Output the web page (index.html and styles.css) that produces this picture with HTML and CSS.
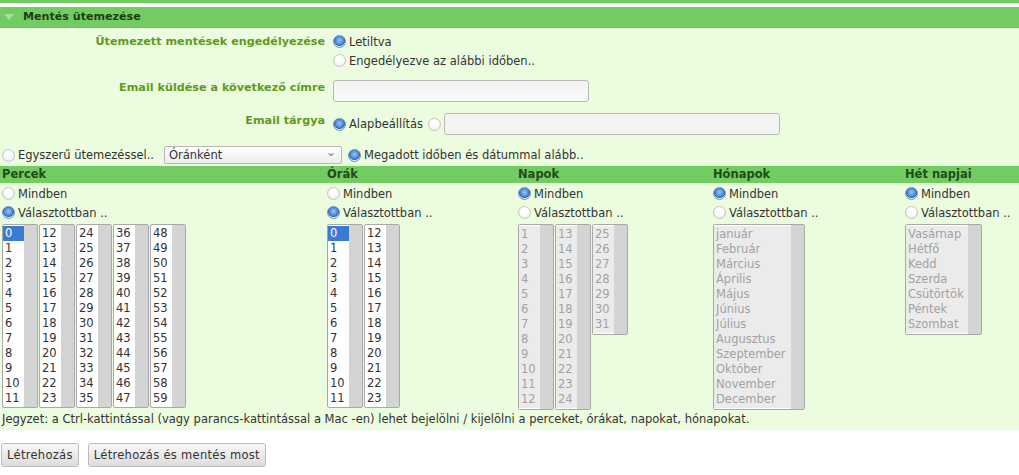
FILE: index.html
```html
<!DOCTYPE html>
<html lang="hu">
<head>
    <meta charset="UTF-8">
    <title>Mentés ütemezése</title>
    <link rel="stylesheet" href="styles.css">
</head>
<body>
    <div class="top-bar"></div>
    <div class="section-head"><span class="arrow"></span>Mentés ütemezése</div>
    <div class="section-body">
        <div class="field">
            <div class="label">Ütemezett mentések engedélyezése</div>
            <div class="controls stack">
                <label class="opt"><input type="radio" name="en" checked> Letiltva</label>
                <label class="opt"><input type="radio" name="en"> Engedélyezve az alábbi időben..</label>
            </div>
        </div>
        <div class="field email">
            <div class="label">Email küldése a következő címre</div>
            <div class="controls"><input class="text" type="text" style="width:256px"></div>
        </div>
        <div class="field subject">
            <div class="label">Email tárgya</div>
            <div class="controls row">
                <label class="opt"><input type="radio" name="subj" checked> Alapbeállítás</label>
                <input type="radio" name="subj" class="lone">
                <input class="text" type="text" style="width:336px">
            </div>
        </div>
        <div class="mode-row">
            <label class="opt"><input type="radio" name="mode"> Egyszerű ütemezéssel..</label>
            <div class="select">Óránként<span class="chev">&#8964;</span></div>
            <label class="opt"><input type="radio" name="mode" checked> Megadott időben és dátummal alább..</label>
        </div>

        <div class="sched">
            <div class="col-head">Percek</div>
            <div class="col-head">Órák</div>
            <div class="col-head">Napok</div>
            <div class="col-head">Hónapok</div>
            <div class="col-head">Hét napjai</div>

            <div class="col">
                <label class="opt"><input type="radio" name="m"> Mindben</label>
                <label class="opt"><input type="radio" name="m" checked> Választottban ..</label>
                <div class="lists" id="minutes"></div>
            </div>
            <div class="col">
                <label class="opt"><input type="radio" name="h"> Mindben</label>
                <label class="opt"><input type="radio" name="h" checked> Választottban ..</label>
                <div class="lists" id="hours"></div>
            </div>
            <div class="col">
                <label class="opt"><input type="radio" name="d" checked> Mindben</label>
                <label class="opt"><input type="radio" name="d"> Választottban ..</label>
                <div class="lists" id="days"></div>
            </div>
            <div class="col">
                <label class="opt"><input type="radio" name="mo" checked> Mindben</label>
                <label class="opt"><input type="radio" name="mo"> Választottban ..</label>
                <div class="lists" id="months"></div>
            </div>
            <div class="col">
                <label class="opt"><input type="radio" name="w" checked> Mindben</label>
                <label class="opt"><input type="radio" name="w"> Választottban ..</label>
                <div class="lists" id="weekdays"></div>
            </div>
        </div>
        <p class="note">Jegyzet: a Ctrl-kattintással (vagy parancs-kattintással a Mac -en) lehet bejelölni / kijelölni a perceket, órákat, napokat, hónapokat.</p>
    </div>
    <div class="buttons">
        <button>Létrehozás</button>
        <button>Létrehozás és mentés most</button>
    </div>

    <script>
        function range(a, b) {
            const out = [];
            for (let i = a; i <= b; i++) out.push(String(i));
            return out;
        }

        function addList(id, items, opts) {
            opts = opts || {};
            const box = document.createElement('div');
            box.className = 'listbox' + (opts.disabled ? ' disabled' : '') + (opts.wide ? ' ' + opts.wide : '');
            const inner = document.createElement('div');
            inner.className = 'items';
            items.forEach((text, i) => {
                const row = document.createElement('div');
                row.className = 'item' + (opts.selected && i === 0 ? ' selected' : '');
                row.textContent = text;
                inner.appendChild(row);
            });
            const bar = document.createElement('div');
            bar.className = 'scroll';
            box.appendChild(inner);
            box.appendChild(bar);
            document.getElementById(id).appendChild(box);
        }

        addList('minutes', range(0, 11), { selected: true });
        addList('minutes', range(12, 23));
        addList('minutes', range(24, 35));
        addList('minutes', range(36, 47));
        addList('minutes', range(48, 59));

        addList('hours', range(0, 11), { selected: true });
        addList('hours', range(12, 23));

        addList('days', range(1, 12), { disabled: true });
        addList('days', range(13, 24), { disabled: true });
        addList('days', range(25, 31), { disabled: true });

        addList('months', ['január', 'Február', 'Március', 'Április', 'Május', 'Június', 'Július',
            'Augusztus', 'Szeptember', 'Október', 'November', 'December'], { disabled: true, wide: 'months' });

        addList('weekdays', ['Vasárnap', 'Hétfő', 'Kedd', 'Szerda', 'Csütörtök', 'Péntek', 'Szombat'],
            { disabled: true, wide: 'weekdays' });
    </script>
</body>
</html>
```

FILE: styles.css
```css
body {
    margin: 0;
    font-family: "DejaVu Sans", Verdana, sans-serif;
    font-size: 11.5px;
    color: #333;
    background-color: #ffffff;
}
.top-bar {
    height: 3px;
    background-color: #72cc62;
    margin-bottom: 4px;
}
.section-head {
    height: 20px;
    line-height: 20px;
    background-color: #72cc62;
    border-bottom: 1px solid #68c058;
    color: #1e3d17;
    font-weight: bold;
    font-size: 11.1px;
    display: flex;
    align-items: center;
}
.section-head .arrow {
    width: 0;
    height: 0;
    border-left: 5px solid transparent;
    border-right: 5px solid transparent;
    border-top: 6px solid #a8dca0;
    margin: 0 9px 0 4px;
}
.section-body {
    background-color: #ecfcdf;
    padding-top: 4px;
    padding-bottom: 2px;
}
.field {
    display: grid;
    grid-template-columns: 325px 1fr;
    column-gap: 8px;
}
.field .label {
    text-align: right;
    color: #5f9a1c;
    font-weight: bold;
    font-size: 11.2px;
    line-height: 19px;
}
.field.email {
    margin-top: 10px;
}
.field.email .label,
.field.subject .label {
    line-height: 16px;
}
.field.subject {
    margin-top: 11px;
}
.controls.stack {
    display: flex;
    flex-direction: column;
}
.controls.row {
    display: flex;
    align-items: center;
    height: 22px;
}
.opt {
    display: flex;
    align-items: center;
    height: 19px;
    white-space: nowrap;
    color: #333;
    font-size: 11.5px;
}
input[type="radio"] {
    appearance: none;
    -webkit-appearance: none;
    width: 13px;
    height: 13px;
    margin: 0 3px 0 0;
    border-radius: 50%;
    border: 1px solid #c4c4c4;
    background: radial-gradient(circle at 50% 35%, #ffffff 30%, #e6e6e6 100%);
    box-sizing: border-box;
    flex: none;
}
input[type="radio"]:checked {
    border-color: #6e8fb6;
    background: radial-gradient(circle at 50% 40%, #9cc7f5 0%, #4d8ce0 45%, #2f67b8 60%, #e8eef6 70%, #ffffff 100%);
}
input.lone {
    margin-left: 5px;
}
input.text {
    height: 22px;
    box-sizing: border-box;
    border: 1px solid #b8b8b8;
    border-radius: 3px;
    background: linear-gradient(#f2f2f2, #fafafa);
    padding: 0 4px;
}
.field.subject input.text {
    background: #f4f4f4;
}
.mode-row {
    display: flex;
    align-items: center;
    height: 18px;
    margin-top: 11px;
    padding-left: 2px;
}
.select {
    width: 178px;
    height: 18px;
    box-sizing: border-box;
    border: 1px solid #b8b8b8;
    border-radius: 2px;
    background: linear-gradient(#ffffff, #ececec);
    font-size: 11.5px;
    line-height: 16px;
    padding-left: 4px;
    margin: 0 6px 0 10px;
    position: relative;
    color: #333;
}
.select .chev {
    position: absolute;
    right: 5px;
    top: -3px;
    color: #888;
    font-size: 12px;
}
.sched {
    display: grid;
    grid-template-columns: 325px 191px 195px 192px 1fr;
    margin-top: 2px;
}
.col-head {
    background-color: #72cc62;
    height: 17px;
    line-height: 17px;
    font-weight: bold;
    font-size: 11.5px;
    color: #234a1a;
    padding-left: 2px;
}
.col {
    padding-left: 2px;
    padding-top: 1px;
}
.lists {
    display: flex;
    align-items: flex-start;
    gap: 1px;
    margin-top: 2px;
}
.listbox {
    display: flex;
    width: 34px;
    border: 1px solid #a8a8a8;
    border-radius: 2px;
    background-color: #ffffff;
    font-size: 11.5px;
}
.listbox .items {
    flex: 1;
    padding: 1px 0;
}
.listbox .item {
    height: 15px;
    line-height: 15px;
    padding-left: 2px;
    color: #333;
    white-space: nowrap;
}
.listbox .item.selected {
    background-color: #3b7bd4;
    color: #ffffff;
}
.listbox .scroll {
    width: 13px;
    background-color: #d4d4d4;
}
.listbox.disabled .items {
    background-color: #ebebeb;
    border-top: 1px solid #ffffff;
    border-bottom: 1px solid #ffffff;
}
.listbox.disabled .item {
    color: #a2a2a2;
}
.listbox.months {
    width: 90px;
}
.listbox.weekdays {
    width: 75px;
}
.note {
    margin: 0 0 0 2px;
    height: 18px;
    line-height: 18px;
    font-size: 11.5px;
    color: #333;
}
.buttons {
    display: flex;
    gap: 9px;
    margin-top: 13px;
    padding-left: 1px;
}
.buttons button {
    height: 24px;
    font-family: "DejaVu Sans", Verdana, sans-serif;
    font-size: 11.5px;
    color: #333;
    border: 1px solid #bcbcbc;
    border-radius: 3px;
    background: linear-gradient(#f8f8f8, #dcdcdc);
    padding: 0 5px;
    letter-spacing: 0.3px;
}
```
